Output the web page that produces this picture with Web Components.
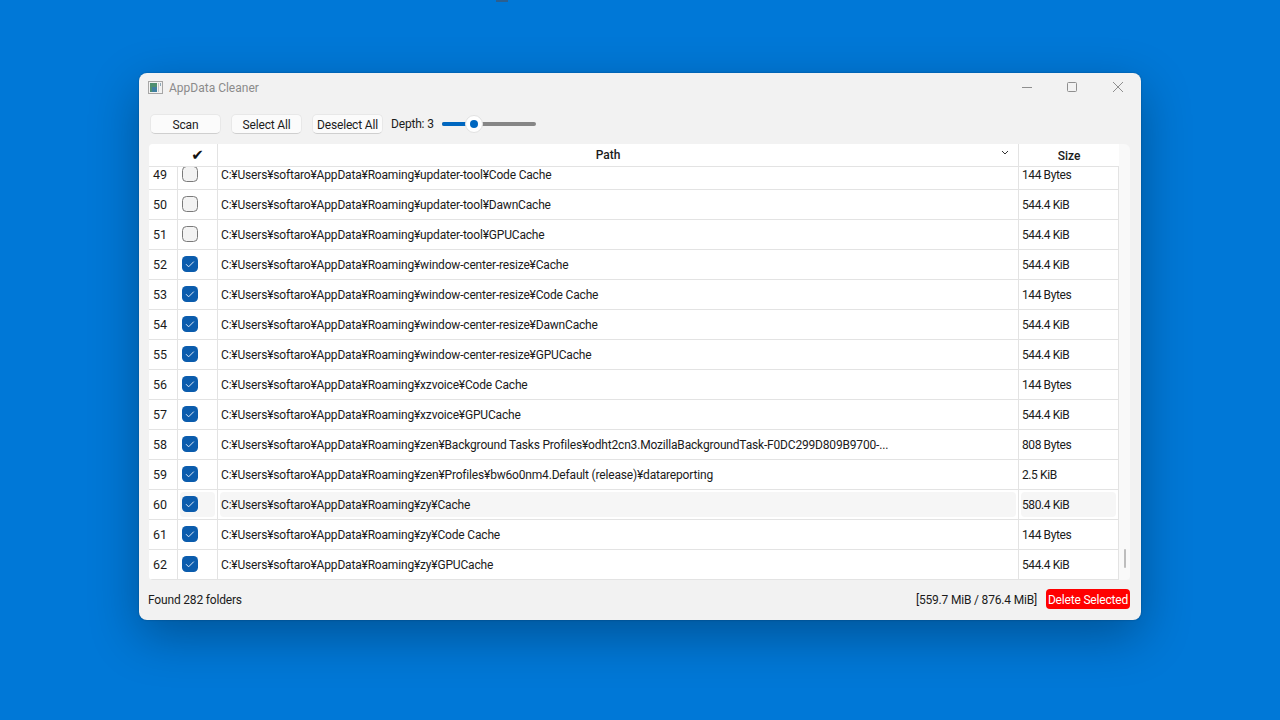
<!DOCTYPE html>
<html>
<head>
<meta charset="utf-8">
<title>AppData Cleaner</title>
<style>
    html, body { height: 100%; }
    body {
        margin: 0;
        height: 720px;
        overflow: hidden;
        box-sizing: border-box;
        padding: 73px 0 0 139px;
        background: #0078d7;
        font-family: Roboto, "Noto Sans", sans-serif;
        font-size: 12px;
        letter-spacing: -0.18px;
        color: #1b1b1b;
    }
    .peek {
        position: absolute;
        left: 496px;
        top: 0;
        width: 12px;
        height: 2px;
        background: #2b5f90;
    }
</style>
</head>
<body>
<div class="peek"></div>
<app-window>
    <title-bar>AppData Cleaner</title-bar>
    <tool-bar>
        <ui-button style="margin-right:10px">Scan</ui-button>
        <ui-button style="margin-right:10px">Select All</ui-button>
        <ui-button style="margin-right:8px">Deselect All</ui-button>
        <depth-slider value="3"></depth-slider>
    </tool-bar>
    <path-table id="table"></path-table>
    <status-bar found="Found 282 folders" total="[559.7 MiB / 876.4 MiB]"></status-bar>
</app-window>

<script>
class AppWindow extends HTMLElement {
    constructor() {
        super();
        this.attachShadow({ mode: 'open' });
    }
    connectedCallback() {
        this.shadowRoot.innerHTML = `
            <style>
                :host {
                    display: flex;
                    flex-direction: column;
                    width: 1002px;
                    height: 547px;
                    background: #f2f2f2;
                    border-radius: 8px;
                    box-shadow: 0 16px 50px rgba(0,0,0,0.3), 0 0 2px rgba(0,0,0,0.3);
                }
            </style>
            <slot></slot>
        `;
    }
}

class TitleBar extends HTMLElement {
    constructor() {
        super();
        this.attachShadow({ mode: 'open' });
    }
    connectedCallback() {
        this.shadowRoot.innerHTML = `
            <style>
                :host {
                    display: flex;
                    align-items: center;
                    height: 29px;
                    padding-left: 9px;
                    color: #8b8b8b;
                    font-size: 12px;
                    letter-spacing: 0;
                }
                .icon { width: 15px; height: 13px; margin-right: 6px; }
                .title { flex: 1; }
                .ctl { width: 45px; height: 29px; display: flex; align-items: center; justify-content: center; }
                .ctl svg { width: 12px; height: 12px; margin-top: -2px; }
            </style>
            <svg class="icon" viewBox="0 0 15 13">
                <rect x="0.5" y="0.5" width="14" height="12" fill="#f2f2f2" stroke="#a6a6a6"/>
                <rect x="2" y="2" width="7" height="9" fill="#4f8f70"/>
                <rect x="4" y="6" width="5" height="5" fill="#3f7fa0"/>
                <rect x="10" y="2" width="1" height="9" fill="#c4c4c4"/>
                <rect x="12" y="2" width="1" height="3" fill="#8fa8b8"/>
            </svg>
            <span class="title"><slot></slot></span>
            <div class="ctl"><svg viewBox="0 0 12 12"><path d="M1 6.5h10" stroke="#8f8f8f" fill="none"/></svg></div>
            <div class="ctl"><svg viewBox="0 0 12 12"><rect x="1.5" y="1.5" width="9" height="9" rx="1" stroke="#8f8f8f" fill="none"/></svg></div>
            <div class="ctl" style="width:47px"><svg viewBox="0 0 12 12"><path d="M1 1l10 10M11 1L1 11" stroke="#8f8f8f" fill="none"/></svg></div>
        `;
    }
}

class ToolBar extends HTMLElement {
    constructor() {
        super();
        this.attachShadow({ mode: 'open' });
    }
    connectedCallback() {
        this.shadowRoot.innerHTML = `
            <style>
                :host {
                    display: flex;
                    align-items: center;
                    height: 20px;
                    margin-top: 12px;
                    padding-left: 11px;
                }
            </style>
            <slot></slot>
        `;
    }
}

class UiButton extends HTMLElement {
    constructor() {
        super();
        this.attachShadow({ mode: 'open' });
    }
    connectedCallback() {
        this.shadowRoot.innerHTML = `
            <style>
                :host {
                    display: flex;
                    align-items: center;
                    justify-content: center;
                    box-sizing: border-box;
                    width: 71px;
                    height: 20px;
                    padding-top: 1px;
                    background: #fbfbfb;
                    border: 1px solid #e8e8e8;
                    border-bottom-color: #cfcfcf;
                    border-radius: 5px;
                    white-space: nowrap;
                }
            </style>
            <slot></slot>
        `;
    }
}

class DepthSlider extends HTMLElement {
    constructor() {
        super();
        this.attachShadow({ mode: 'open' });
    }
    connectedCallback() {
        this.shadowRoot.innerHTML = `
            <style>
                :host { display: flex; align-items: center; }
                .label { width: 51px; white-space: nowrap; }
                .track { position: relative; width: 94px; height: 4px; border-radius: 2px; background: #868686; }
                .fill { width: 32px; height: 4px; border-radius: 2px; background: #0067c0; }
                .thumb {
                    position: absolute; left: 23px; top: -7px;
                    width: 18px; height: 18px; box-sizing: border-box;
                    border-radius: 50%; background: #fff;
                    border: 1px solid #e2e2e2;
                    display: flex; align-items: center; justify-content: center;
                }
                .thumb i { width: 8px; height: 8px; border-radius: 50%; background: #0067c0; }
            </style>
            <span class="label">Depth: ${this.getAttribute('value')}</span>
            <div class="track"><div class="fill"></div><div class="thumb"><i></i></div></div>
        `;
    }
}

class CheckBox extends HTMLElement {
    constructor() {
        super();
        this.attachShadow({ mode: 'open' });
    }
    connectedCallback() {
        const on = this.hasAttribute('checked');
        this.shadowRoot.innerHTML = `
            <style>
                :host { display: block; width: 16px; height: 16px; margin-top: -2px; }
                svg { display: block; }
            </style>
            <svg width="16" height="16" viewBox="0 0 16 16">
                ${on
                    ? '<rect x="0" y="0" width="16" height="16" rx="4.5" fill="#0b5cad"/><path d="M4 8.2l2.6 2.6 5.2-5.2" stroke="#dfeaf5" fill="none"/>'
                    : '<rect x="0.5" y="0.5" width="15" height="15" rx="4" fill="#f3f3f3" stroke="#7a7a7a"/>'}
            </svg>
        `;
    }
}

class TableRow extends HTMLElement {
    constructor() {
        super();
        this.attachShadow({ mode: 'open' });
    }
    connectedCallback() {
        const hover = this.hasAttribute('hover');
        this.shadowRoot.innerHTML = `
            <style>
                :host {
                    display: grid;
                    grid-template-columns: 29px 40px 801px 100px;
                    height: 30px;
                    box-sizing: border-box;
                    border-bottom: 1px solid #e3e3e3;
                }
                .cell {
                    display: flex;
                    align-items: center;
                    border-right: 1px solid #e3e3e3;
                    white-space: nowrap;
                    overflow: hidden;
                }
                .num { padding-left: 4px; font-size: 12.5px; letter-spacing: 0; }
                .inner {
                    flex: 1;
                    height: 25px;
                    display: flex;
                    align-items: center;
                    border-radius: 4px;
                    margin: 0 2px;
                    padding-left: 1px;
                    ${hover ? 'background: #f6f6f6;' : ''}
                }
                .chk .inner { padding-left: 2px; }
                .size { letter-spacing: -0.4px; }
            </style>
            <div class="cell num">${this.getAttribute('n')}</div>
            <div class="cell chk"><div class="inner"><check-box ${this.hasAttribute('checked') ? 'checked' : ''}></check-box></div></div>
            <div class="cell"><div class="inner"><slot></slot></div></div>
            <div class="cell size"><div class="inner">${this.getAttribute('size')}</div></div>
        `;
    }
}

class PathTable extends HTMLElement {
    constructor() {
        super();
        this.attachShadow({ mode: 'open' });
    }
    connectedCallback() {
        this.shadowRoot.innerHTML = `
            <style>
                :host {
                    display: block;
                    position: relative;
                    margin: 10px 11px 0 10px;
                    height: 436px;
                    background: #f9f9f9;
                    border-radius: 4px 6px 4px 4px;
                    overflow: hidden;
                }
                .head {
                    display: grid;
                    grid-template-columns: 29px 40px 801px 100px;
                    height: 23px;
                    box-sizing: border-box;
                    border-bottom: 1px solid #e3e3e3;
                    background: #fff;
                    position: relative;
                    z-index: 1;
                    width: 970px;
                    letter-spacing: 0;
                }
                .head div {
                    display: flex;
                    align-items: center;
                    justify-content: center;
                    border-right: 1px solid #e3e3e3;
                    position: relative;
                    font-size: 12px;
                    font-weight: 500;
                }
                .head div:first-child { border-right: 0; }
                .head .path { padding-right: 20px; }
                .head .size { border-right: 0; padding-top: 1px; }
                .head .tick { font-family: "DejaVu Sans", sans-serif; font-size: 15px; font-weight: 700; color: #111; }
                .sort { position: absolute; right: 9px; top: 6px; width: 8px; height: 5px; }
                .list { width: 970px; margin-top: -7px; background: #fff; }
                .bar {
                    position: absolute;
                    right: 4px;
                    top: 405px;
                    width: 2px;
                    height: 19px;
                    border-radius: 1px;
                    background: #bdbdbd;
                }
            </style>
            <div class="head">
                <div></div>
                <div class="tick">✔</div>
                <div class="path">Path<svg class="sort" viewBox="0 0 8 5"><path d="M1 1l3 3 3-3" stroke="#333" fill="none"/></svg></div>
                <div class="size">Size</div>
            </div>
            <div class="list"><slot></slot></div>
            <div class="bar"></div>
        `;
    }
}

class StatusBar extends HTMLElement {
    constructor() {
        super();
        this.attachShadow({ mode: 'open' });
    }
    connectedCallback() {
        this.shadowRoot.innerHTML = `
            <style>
                :host {
                    display: flex;
                    align-items: center;
                    height: 20px;
                    margin-top: 9px;
                    padding: 0 11px 0 9px;
                }
                .found { flex: 1; padding-top: 1px; }
                .total { margin-right: 9px; padding-top: 1px; }
                .del {
                    display: flex; align-items: center; justify-content: center;
                    width: 84px; height: 20px;
                    padding-top: 1px; box-sizing: border-box;
                    background: #ff0000; color: #fff;
                    border-radius: 4px;
                    white-space: nowrap;
                }
            </style>
            <span class="found">${this.getAttribute('found')}</span>
            <span class="total">${this.getAttribute('total')}</span>
            <div class="del">Delete Selected</div>
        `;
    }
}

customElements.define('app-window', AppWindow);
customElements.define('title-bar', TitleBar);
customElements.define('tool-bar', ToolBar);
customElements.define('ui-button', UiButton);
customElements.define('depth-slider', DepthSlider);
customElements.define('check-box', CheckBox);
customElements.define('table-row', TableRow);
customElements.define('path-table', PathTable);
customElements.define('status-bar', StatusBar);

const base = 'C:¥Users¥softaro¥AppData¥Roaming¥';
const rows = [
    [49, 0, 'updater-tool¥Code Cache', '144 Bytes'],
    [50, 0, 'updater-tool¥DawnCache', '544.4 KiB'],
    [51, 0, 'updater-tool¥GPUCache', '544.4 KiB'],
    [52, 1, 'window-center-resize¥Cache', '544.4 KiB'],
    [53, 1, 'window-center-resize¥Code Cache', '144 Bytes'],
    [54, 1, 'window-center-resize¥DawnCache', '544.4 KiB'],
    [55, 1, 'window-center-resize¥GPUCache', '544.4 KiB'],
    [56, 1, 'xzvoice¥Code Cache', '144 Bytes'],
    [57, 1, 'xzvoice¥GPUCache', '544.4 KiB'],
    [58, 1, 'zen¥Background Tasks Profiles¥odht2cn3.MozillaBackgroundTask-F0DC299D809B9700-...', '808 Bytes'],
    [59, 1, 'zen¥Profiles¥bw6o0nm4.Default (release)¥datareporting', '2.5 KiB'],
    [60, 1, 'zy¥Cache', '580.4 KiB'],
    [61, 1, 'zy¥Code Cache', '144 Bytes'],
    [62, 1, 'zy¥GPUCache', '544.4 KiB'],
];

const table = document.getElementById('table');
rows.forEach(([n, checked, path, size]) => {
    const row = document.createElement('table-row');
    row.setAttribute('n', n);
    row.setAttribute('size', size);
    if (checked) row.setAttribute('checked', '');
    if (n === 60) row.setAttribute('hover', '');
    row.textContent = base + path;
    table.appendChild(row);
});
</script>
</body>
</html>
